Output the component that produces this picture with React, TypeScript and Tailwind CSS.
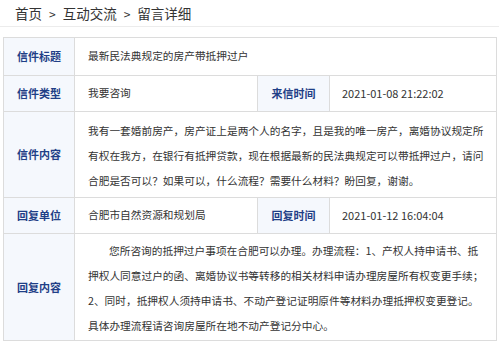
import React from "react";

const font = { fontFamily: '"Noto Sans CJK SC", "Noto Sans", sans-serif' };

const Label = ({ children, rowSpan }: { children: React.ReactNode; rowSpan?: number }) => (
  <td
    rowSpan={rowSpan}
    className="border border-[#dcdcdc] bg-[#f5f8fd] text-center align-middle text-[11px] font-bold text-[#1f3f87] p-0"
  >
    {children}
  </td>
);

export default function App() {
  return (
    <div className="w-[499px] h-[345px] bg-white overflow-hidden" style={font}>
      <div className="h-[27px] flex items-center pl-[15px] text-[13.5px] text-[#333] border-b border-[#ececec] pt-[1px]">
        <span>首页</span>
        <span className="px-[7px] text-[12px]">&gt;</span>
        <span>互动交流</span>
        <span className="px-[7px] text-[12px]">&gt;</span>
        <span>留言详细</span>
      </div>
      <table className="ml-[3px] mt-[10px] w-[494px] border-collapse table-fixed text-[10.7px] text-[#333]">
        <colgroup>
          <col className="w-[71px]" />
          <col className="w-[183px]" />
          <col className="w-[72px]" />
          <col />
        </colgroup>
        <tbody>
          <tr className="h-[38px]">
            <Label>信件标题</Label>
            <td colSpan={3} className="border border-[#dcdcdc] pl-[13px] align-middle">
              最新民法典规定的房产带抵押过户
            </td>
          </tr>
          <tr className="h-[36px]">
            <Label>信件类型</Label>
            <td className="border border-[#dcdcdc] pl-[13px] align-middle">我要咨询</td>
            <Label>来信时间</Label>
            <td className="border border-[#dcdcdc] pl-[12px] align-middle text-[11px]">2021-01-08 21:22:02</td>
          </tr>
          <tr className="h-[85px]">
            <Label>信件内容</Label>
            <td colSpan={3} className="border border-[#dcdcdc] pl-[13px] pt-[6px] pb-[4px] align-top leading-[25px]">
              <div className="whitespace-nowrap">我有一套婚前房产，房产证上是两个人的名字，且是我的唯一房产，离婚协议规定所</div>
              <div className="whitespace-nowrap">有权在我方，在银行有抵押贷款，现在根据最新的民法典规定可以带抵押过户，请问</div>
              <div className="whitespace-nowrap">合肥是否可以？如果可以，什么流程？需要什么材料？盼回复，谢谢。</div>
            </td>
          </tr>
          <tr className="h-[36px]">
            <Label>回复单位</Label>
            <td className="border border-[#dcdcdc] pl-[13px] align-middle">合肥市自然资源和规划局</td>
            <Label>回复时间</Label>
            <td className="border border-[#dcdcdc] pl-[12px] align-middle text-[11px]">2021-01-12 16:04:04</td>
          </tr>
          <tr className="h-[107px]">
            <Label>回复内容</Label>
            <td colSpan={3} className="border border-[#dcdcdc] pl-[13px] pt-[4px] pb-0 align-top leading-[25px]">
              <div className="whitespace-nowrap pl-[21px]">您所咨询的抵押过户事项在合肥可以办理。办理流程：1、产权人持申请书、抵</div>
              <div className="whitespace-nowrap">押权人同意过户的函、离婚协议书等转移的相关材料申请办理房屋所有权变更手续；</div>
              <div className="whitespace-nowrap">2、同时，抵押权人须持申请书、不动产登记证明原件等材料办理抵押权变更登记。</div>
              <div className="whitespace-nowrap">具体办理流程请咨询房屋所在地不动产登记分中心。</div>
            </td>
          </tr>
        </tbody>
      </table>
    </div>
  );
}
